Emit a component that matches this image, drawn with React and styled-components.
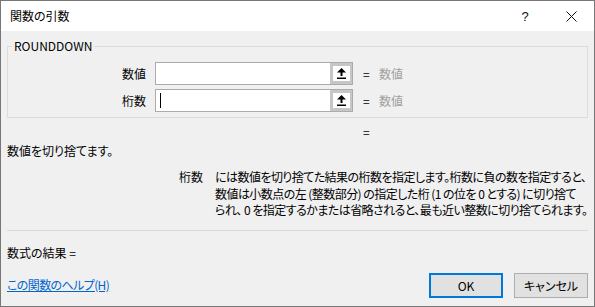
import React from 'react';
import styled, { createGlobalStyle } from 'styled-components';

const GlobalStyle = createGlobalStyle`
  html, body {
    margin: 0;
    padding: 0;
    background: #ffffff;
  }
  body {
    font-family: "Noto Sans CJK JP", "Noto Sans", sans-serif;
    font-size: 12px;
    font-feature-settings: "palt";
    color: #000000;
  }
`;

const Window = styled.div`
  box-sizing: border-box;
  width: 595px;
  height: 307px;
  border: 1px solid #777777;
  display: flex;
  flex-direction: column;
  background: #f0f0f0;
  overflow: hidden;
`;

const TitleBar = styled.div`
  height: 30px;
  background: #ffffff;
  display: flex;
  align-items: center;
  padding-left: 9px;
  flex-shrink: 0;
`;

const Title = styled.div`
  flex: 1;
  font-size: 12px;
  line-height: 16px;
`;

const TitleButton = styled.div`
  width: 46px;
  height: 30px;
  display: flex;
  align-items: center;
  justify-content: center;
  font-family: "Liberation Sans", sans-serif;
  font-size: 13px;
  color: #111111;
`;

const Body = styled.div`
  flex: 1;
  display: flex;
  flex-direction: column;
  padding: 0 6px;
`;

const Group = styled.fieldset`
  margin: 8px 0 0;
  padding: 0;
  border: 1px solid #dcdcdc;
  min-width: 0;
`;

const Legend = styled.legend`
  margin-left: 4px;
  padding: 0 2px;
  line-height: 14px;
  font-size: 12px;
`;

const ArgGrid = styled.div`
  display: grid;
  grid-template-columns: 138px 198px max-content max-content;
  column-gap: 9px;
  row-gap: 4px;
  padding: 9px 0 5px;
  align-items: center;
`;

const ArgLabel = styled.div`
  text-align: right;
  line-height: 16px;
`;

const Field = styled.div`
  box-sizing: border-box;
  height: 23px;
  border: 1px solid #ababab;
  background: #ffffff;
  display: flex;
`;

const FieldText = styled.div`
  flex: 1;
  display: flex;
  align-items: center;
  padding-left: 4px;
`;

const Caret = styled.div`
  width: 1px;
  height: 15px;
  background: #000000;
`;

const RefButton = styled.div`
  box-sizing: border-box;
  width: 22px;
  height: 21px;
  border: 3px solid #c6c6c6;
  border-right-width: 2px;
  background: #ffffff;
  display: flex;
  align-items: center;
  justify-content: center;
`;

const Equals = styled.div`
  line-height: 16px;
  margin-left: 1px;
  width: 8px;
`;

const Value = styled.div`
  color: #a0a0a0;
  line-height: 16px;
  margin-left: -1px;
`;

const ResultLine = styled.div`
  margin: 6px 0 0 356px;
  line-height: 16px;
`;

const Summary = styled.div`
  margin-top: 3px;
  line-height: 16px;
`;

const Detail = styled.div`
  display: grid;
  grid-template-columns: 208px 1fr;
  margin-top: 10px;
  line-height: 16.5px;
`;

const DetailName = styled.div`
  text-align: right;
  padding-right: 12px;
`;

const DetailLine = styled.div`
  white-space: nowrap;
  letter-spacing: -0.55px;
`;

const Separator = styled.div`
  height: 1px;
  background: #d9d9d9;
  margin-top: 11px;
`;

const FormulaResult = styled.div`
  margin-top: 14px;
  line-height: 16px;
`;

const Footer = styled.div`
  margin-top: 12px;
  display: flex;
  align-items: center;
`;

const HelpLink = styled.a`
  flex: 1;
  color: #0066cc;
  text-decoration: underline;
  line-height: 16px;
  letter-spacing: -0.6px;
  cursor: pointer;
`;

const Button = styled.button`
  box-sizing: border-box;
  width: 74px;
  height: 25px;
  margin-left: ${({ gap }) => gap}px;
  background: #e1e1e1;
  border: ${({ primary }) => (primary ? '2px solid #0078d7' : '1px solid #adadad')};
  font-family: inherit;
  font-size: 12px;
  font-feature-settings: "palt";
  color: #000000;
  padding: 0;
`;

const UpArrow = () => (
  <svg width="9" height="11" viewBox="0 0 9 11">
    <polygon points="4.5,0 0,4.5 9,4.5" fill="#000" />
    <rect x="3.5" y="4" width="2" height="4" fill="#000" />
    <rect x="0" y="9.5" width="9" height="1.5" fill="#000" />
  </svg>
);

const CloseIcon = () => (
  <svg width="11" height="11" viewBox="0 0 11 11">
    <path d="M0.5 0.5 L10.5 10.5 M10.5 0.5 L0.5 10.5" stroke="#111" strokeWidth="1" />
  </svg>
);

const args = [
  { label: '数値', caret: false },
  { label: '桁数', caret: true },
];

export default function App() {
  return (
    <>
      <GlobalStyle />
      <Window>
        <TitleBar>
          <Title>関数の引数</Title>
          <TitleButton>?</TitleButton>
          <TitleButton>
            <CloseIcon />
          </TitleButton>
        </TitleBar>
        <Body>
          <Group>
            <Legend>ROUNDDOWN</Legend>
            <ArgGrid>
              {args.map((a) => (
                <React.Fragment key={a.label}>
                  <ArgLabel>{a.label}</ArgLabel>
                  <Field>
                    <FieldText>{a.caret && <Caret />}</FieldText>
                    <RefButton>
                      <UpArrow />
                    </RefButton>
                  </Field>
                  <Equals>=</Equals>
                  <Value>数値</Value>
                </React.Fragment>
              ))}
            </ArgGrid>
          </Group>
          <ResultLine>=</ResultLine>
          <Summary>数値を切り捨てます。</Summary>
          <Detail>
            <DetailName>桁数</DetailName>
            <div>
              <DetailLine>には数値を切り捨てた結果の桁数を指定します。桁数に負の数を指定すると、</DetailLine>
              <DetailLine>数値は小数点の左 (整数部分) の指定した桁 (1 の位を 0 とする) に切り捨て</DetailLine>
              <DetailLine>られ、 0 を指定するかまたは省略されると、最も近い整数に切り捨てられます。</DetailLine>
            </div>
          </Detail>
          <Separator />
          <FormulaResult>数式の結果 =</FormulaResult>
          <Footer>
            <HelpLink>この関数のヘルプ(H)</HelpLink>
            <Button primary gap={0}>OK</Button>
            <Button gap={11}>キャンセル</Button>
          </Footer>
        </Body>
      </Window>
    </>
  );
}
